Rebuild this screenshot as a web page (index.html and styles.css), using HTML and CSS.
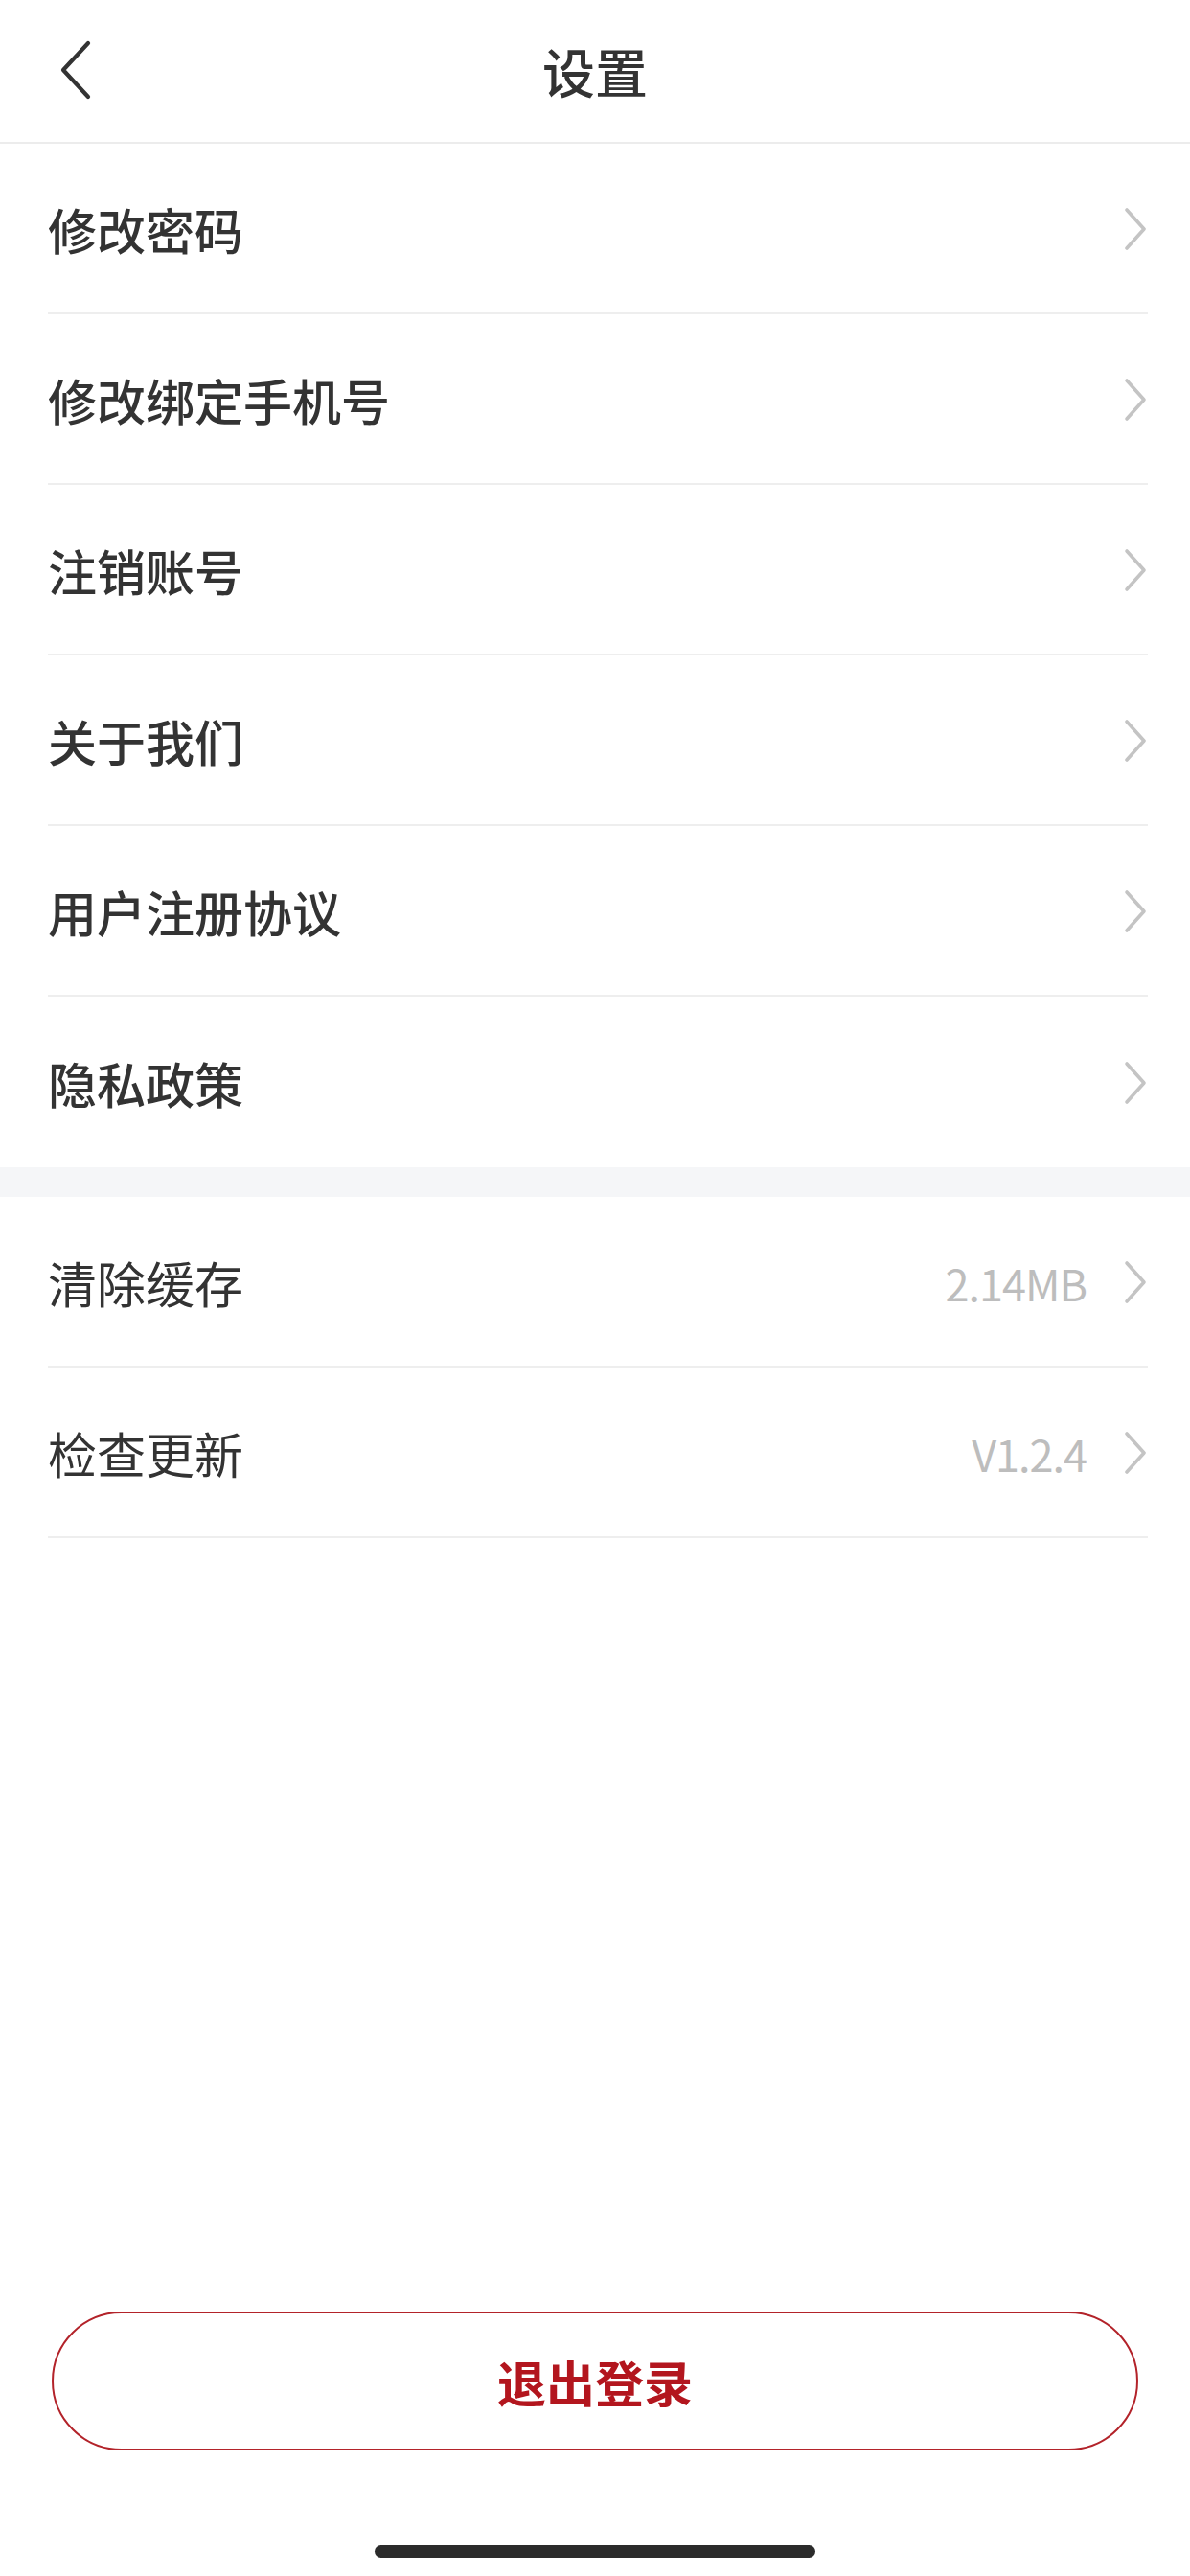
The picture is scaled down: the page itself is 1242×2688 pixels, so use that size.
FILE: index.html
```html
<!DOCTYPE html>
<html lang="zh-CN">
<head>
<meta charset="utf-8">
<title>设置</title>
<link rel="stylesheet" href="styles.css">
</head>
<body>
<div class="page">
  <header class="nav">
    <div class="nav-left">
      <svg class="back" width="34" height="62" viewBox="0 0 34 62"><polyline points="30,3 4,31 30,59" fill="none" stroke="#333" stroke-width="4.2" stroke-linecap="round" stroke-linejoin="round"/></svg>
    </div>
    <h1 class="nav-title">设置</h1>
    <div class="nav-right"></div>
  </header>

  <section class="group">
    <div class="row strong"><span class="label">修改密码</span><span class="end"><svg class="chev" width="26" height="46" viewBox="0 0 26 46"><polyline points="4,3 22,23 4,43" fill="none" stroke="#c4c4c4" stroke-width="3.6" stroke-linecap="round" stroke-linejoin="round"/></svg></span></div>
    <div class="row strong"><span class="label">修改绑定手机号</span><span class="end"><svg class="chev" width="26" height="46" viewBox="0 0 26 46"><polyline points="4,3 22,23 4,43" fill="none" stroke="#c4c4c4" stroke-width="3.6" stroke-linecap="round" stroke-linejoin="round"/></svg></span></div>
    <div class="row strong"><span class="label">注销账号</span><span class="end"><svg class="chev" width="26" height="46" viewBox="0 0 26 46"><polyline points="4,3 22,23 4,43" fill="none" stroke="#c4c4c4" stroke-width="3.6" stroke-linecap="round" stroke-linejoin="round"/></svg></span></div>
    <div class="row strong"><span class="label">关于我们</span><span class="end"><svg class="chev" width="26" height="46" viewBox="0 0 26 46"><polyline points="4,3 22,23 4,43" fill="none" stroke="#c4c4c4" stroke-width="3.6" stroke-linecap="round" stroke-linejoin="round"/></svg></span></div>
    <div class="row strong"><span class="label">用户注册协议</span><span class="end"><svg class="chev" width="26" height="46" viewBox="0 0 26 46"><polyline points="4,3 22,23 4,43" fill="none" stroke="#c4c4c4" stroke-width="3.6" stroke-linecap="round" stroke-linejoin="round"/></svg></span></div>
    <div class="row strong last"><span class="label">隐私政策</span><span class="end"><svg class="chev" width="26" height="46" viewBox="0 0 26 46"><polyline points="4,3 22,23 4,43" fill="none" stroke="#c4c4c4" stroke-width="3.6" stroke-linecap="round" stroke-linejoin="round"/></svg></span></div>
  </section>

  <div class="sep"></div>

  <section class="group">
    <div class="row"><span class="label">清除缓存</span><span class="end"><span class="value">2.14MB</span><svg class="chev" width="26" height="46" viewBox="0 0 26 46"><polyline points="4,3 22,23 4,43" fill="none" stroke="#c4c4c4" stroke-width="3.6" stroke-linecap="round" stroke-linejoin="round"/></svg></span></div>
    <div class="row"><span class="label">检查更新</span><span class="end"><span class="value">V1.2.4</span><svg class="chev" width="26" height="46" viewBox="0 0 26 46"><polyline points="4,3 22,23 4,43" fill="none" stroke="#c4c4c4" stroke-width="3.6" stroke-linecap="round" stroke-linejoin="round"/></svg></span></div>
  </section>

  <div class="spacer"></div>

  <div class="logout-wrap">
    <button class="logout" type="button">退出登录</button>
  </div>

  <div class="home-bar"><span class="home-ind"></span></div>
</div>
</body>
</html>
```

FILE: styles.css
```css
* { box-sizing: border-box; }
html, body {
  margin: 0;
  padding: 0;
  background: #ffffff;
}
body {
  font-family: "Noto Sans CJK SC", "Noto Sans", sans-serif;
  color: #333333;
}
.page {
  width: 1242px;
  height: 2688px;
  display: flex;
  flex-direction: column;
  background: #ffffff;
}
.nav {
  height: 150px;
  flex: none;
  display: grid;
  grid-template-columns: 1fr auto 1fr;
  align-items: center;
  border-bottom: 2px solid #ececec;
  padding-bottom: 2px;
}
.nav-left {
  display: flex;
  align-items: center;
  padding-left: 62px;
}
.back { display: block; }
.nav-title {
  margin: 0;
  font-size: 55px;
  font-weight: 500;
  color: #333333;
  line-height: 1;
}
.group {
  flex: none;
  display: flex;
  flex-direction: column;
}
.row {
  height: 178px;
  margin: 0 44px 0 50px;
  border-bottom: 2px solid #eeeeee;
  display: flex;
  align-items: center;
  justify-content: space-between;
  padding-top: 2px;
}
.row.last { border-bottom: none; }
.label {
  font-size: 51px;
  font-weight: 400;
  color: #333333;
  line-height: 1;
}
.row.strong .label { font-weight: 500; }
.end {
  display: flex;
  align-items: center;
  gap: 38px;
}
.value {
  font-size: 45px;
  color: #bdbdbd;
  line-height: 1;
  letter-spacing: -1px;
}
.chev { display: block; }
.sep {
  flex: none;
  height: 31px;
  background: #f5f6f8;
}
.spacer { flex: 1; }
.logout-wrap {
  flex: none;
  padding: 0 54px;
}
.logout {
  display: block;
  width: 100%;
  height: 145px;
  border: 2px solid #b3232a;
  border-radius: 73px;
  background: #ffffff;
  color: #b3161e;
  font-family: "Noto Sans CJK SC", sans-serif;
  font-size: 51px;
  font-weight: 700;
  cursor: pointer;
}
.home-bar {
  flex: none;
  height: 131px;
  display: flex;
  justify-content: center;
  padding-top: 99px;
}
.home-ind {
  width: 460px;
  height: 13px;
  border-radius: 7px;
  background: #2b2b2b;
}
```
